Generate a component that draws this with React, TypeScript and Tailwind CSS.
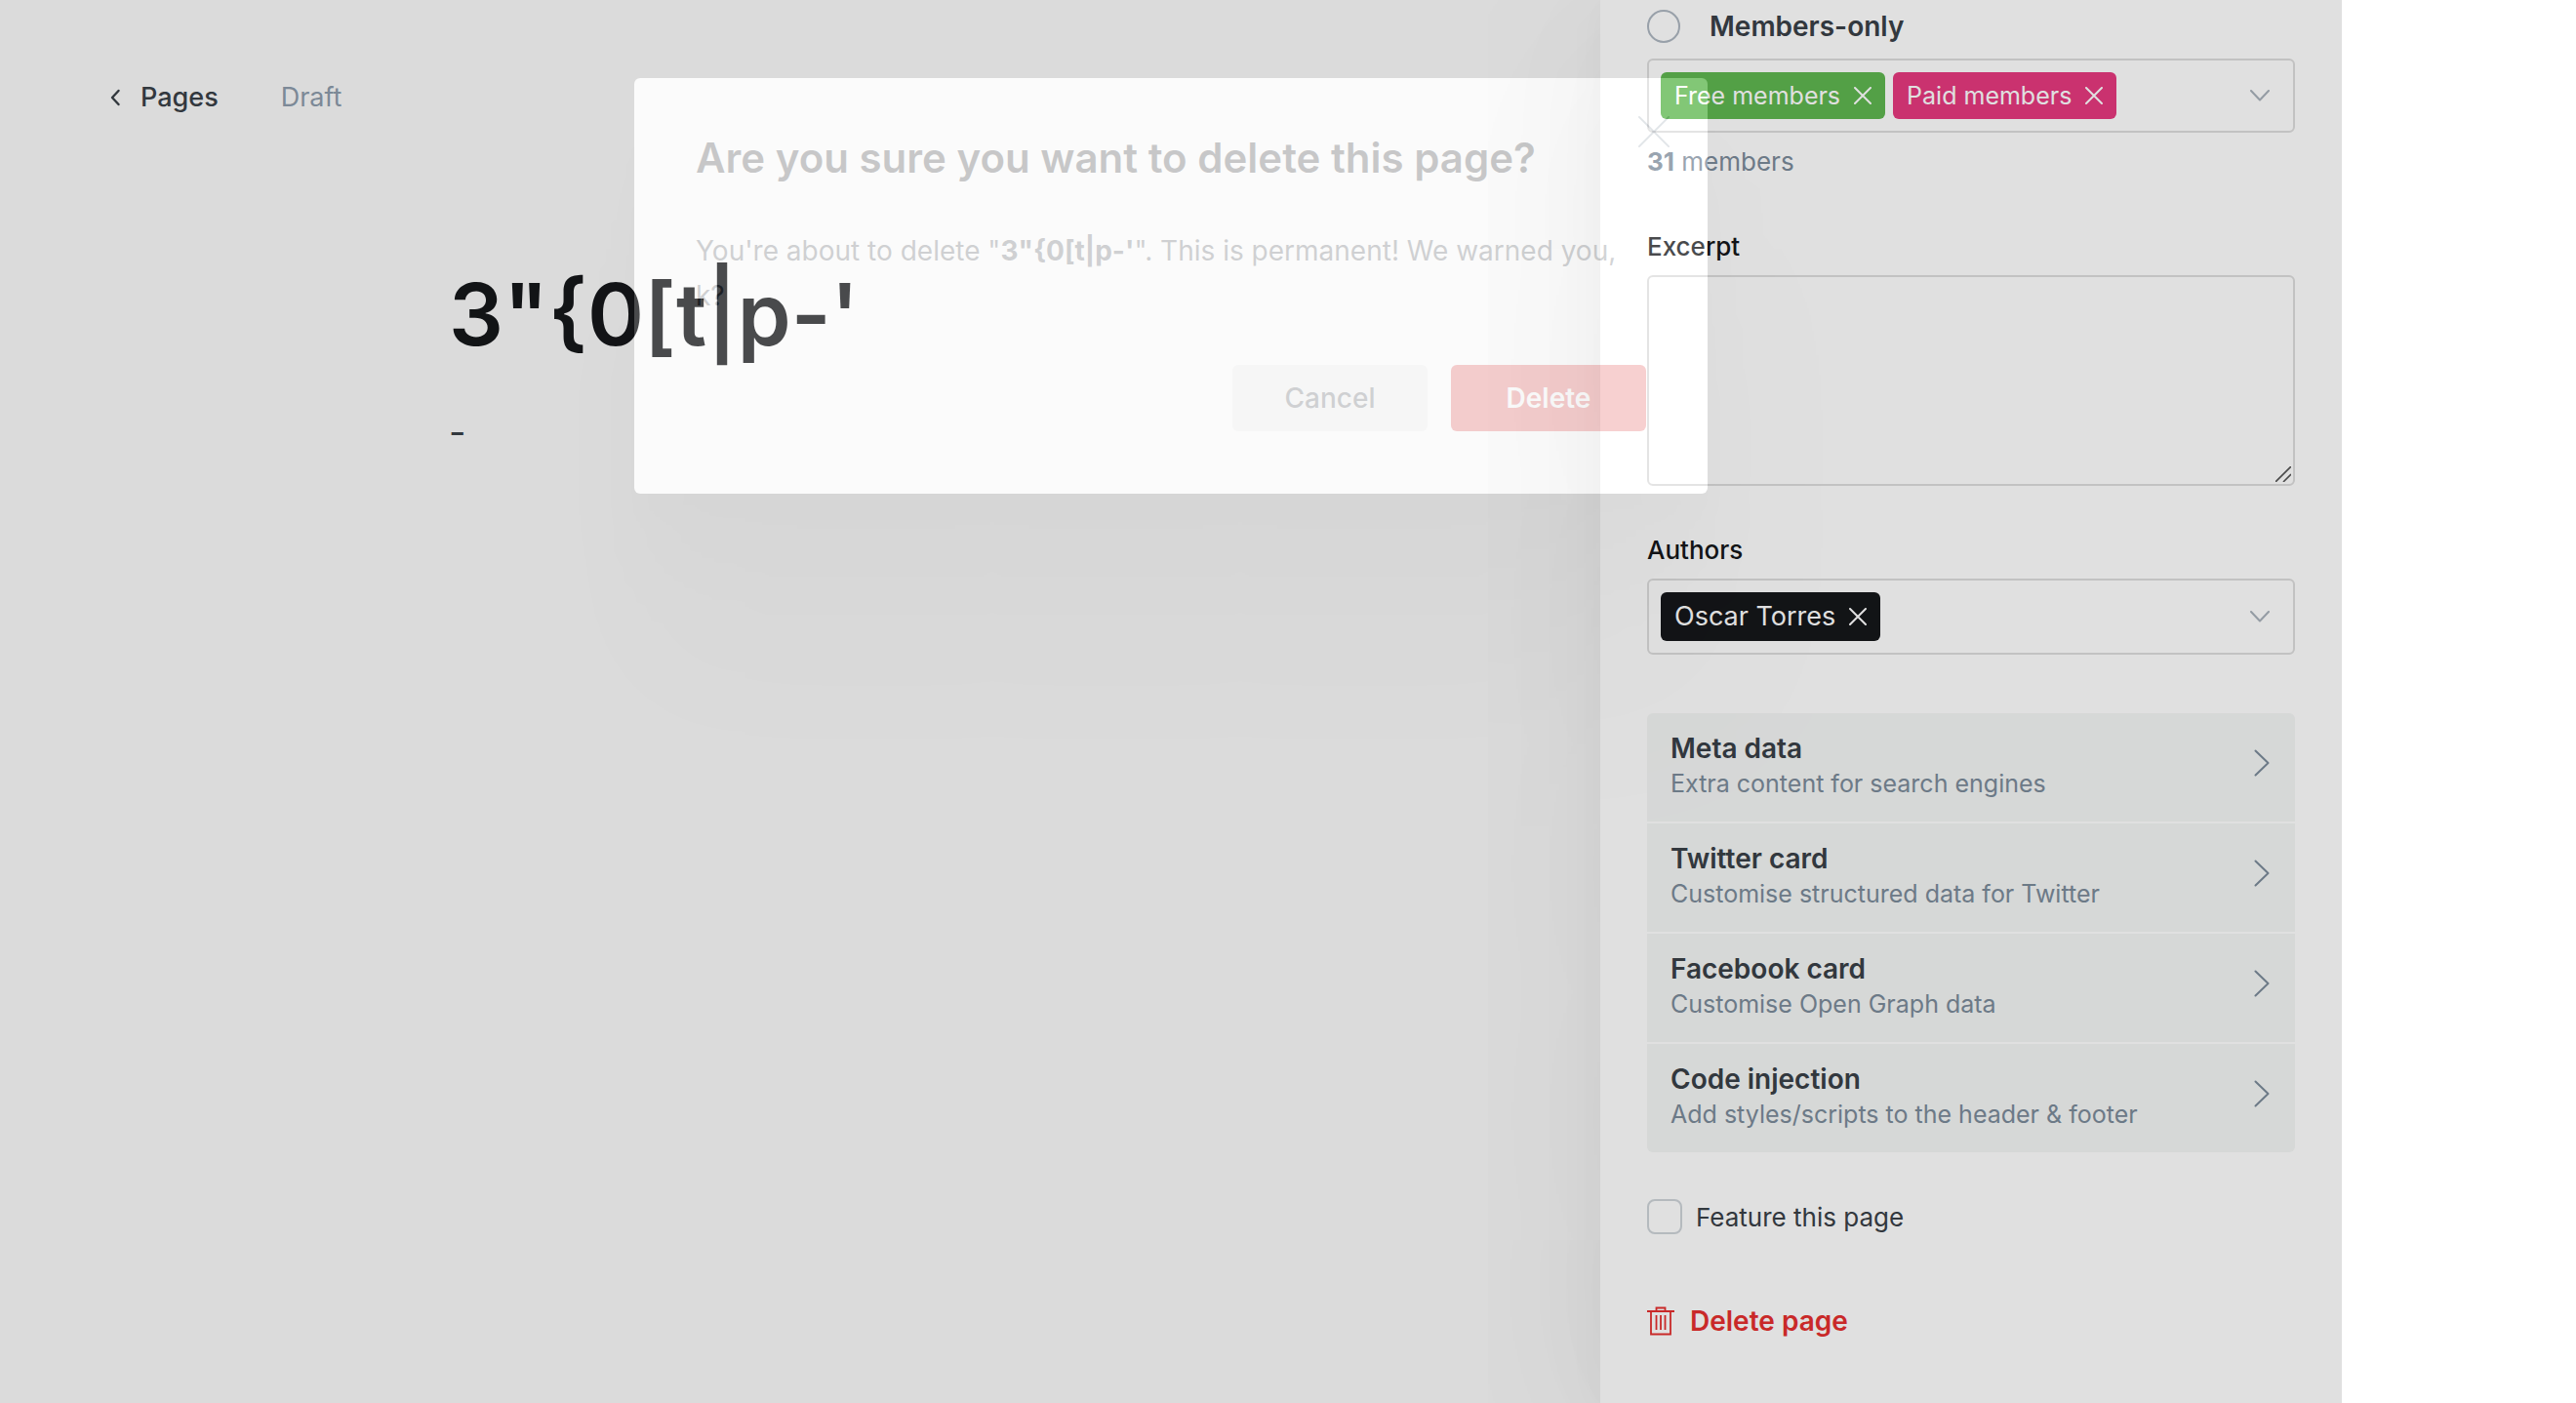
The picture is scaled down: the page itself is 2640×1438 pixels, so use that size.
import type { ReactNode } from "react";

const PAGE_TITLE = "3\"{0[t|p-'";

const SETTINGS_LINKS = [
  { title: "Meta data", hint: "Extra content for search engines" },
  { title: "Twitter card", hint: "Customise structured data for Twitter" },
  { title: "Facebook card", hint: "Customise Open Graph data" },
  { title: "Code injection", hint: "Add styles/scripts to the header & footer" },
];

function Cross({ className }: { className: string }) {
  return (
    <svg viewBox="0 0 18 18" fill="none" stroke="currentColor" strokeLinecap="round" className={className} aria-hidden="true">
      <path d="M1 1l16 16M17 1L1 17" />
    </svg>
  );
}

function Token({ label, className }: { label: string; className: string }) {
  return (
    <span className={`flex items-center gap-3.5 rounded-md px-3.5 leading-8 text-white ${className}`}>
      {label}
      <button type="button" aria-label={`Remove ${label}`}>
        <Cross className="size-[18px] stroke-2" />
      </button>
    </span>
  );
}

function TokenField({ label, className, children }: { label: string; className: string; children: ReactNode }) {
  return (
    <div role="group" aria-label={label} className={`flex items-center gap-2 rounded-md border-2 border-[#dddddd] pl-3 pr-6 ${className}`}>
      {children}
      <button type="button" aria-label={`Open ${label}`} className="ml-auto text-[#a9b2bb]">
        <svg viewBox="0 0 20 12" fill="none" stroke="currentColor" strokeWidth="2" strokeLinecap="round" strokeLinejoin="round" className="h-3 w-5" aria-hidden="true">
          <path d="M1 1l9 9.5L19 1" />
        </svg>
      </button>
    </div>
  );
}

function Editor() {
  return (
    <main className="min-w-0 flex-1 bg-[#fafafa]">
      <header className="flex items-center pl-28 pt-20">
        <a href="#pages" className="flex items-center gap-5 text-[27px] leading-10 font-medium text-[#394047]">
          <svg viewBox="0 0 12 18" fill="none" stroke="currentColor" strokeWidth="2.4" strokeLinecap="round" strokeLinejoin="round" className="h-[18px] w-3" aria-hidden="true">
            <path d="M9.500 2L3 9l6.500 7" />
          </svg>
          Pages
        </a>
        <span className="ml-16 text-[27px] leading-10 text-[#8e9cac]">Draft</span>
      </header>
      <section className="mt-[142px] pl-[460px]">
        <input aria-label="Page title" defaultValue={PAGE_TITLE} className="block h-[120px] w-full bg-transparent text-[88px] font-semibold text-[#15171a] outline-none" />
        <p className="mt-[30px] text-[38px] leading-[60px] text-[#394047]">-</p>
      </section>
    </main>
  );
}

function SettingsPanel() {
  return (
    <aside className="relative w-[760px] shrink-0 bg-white px-12 pt-2 text-[#15171a] shadow-[0_0_40px_rgba(0,0,0,0.03),0_20px_120px_rgba(0,0,0,0.04),0_60px_320px_rgba(0,0,0,0.06)]">
      <label className="flex h-[38px] items-center gap-[30px] text-[28px] font-semibold text-[#394047]">
        <input type="radio" name="visibility" className="size-[34px] appearance-none rounded-full border-2 border-[#aeb7c1]" />
        Members-only
      </label>
      <TokenField label="Member tiers" className="mt-3.5 h-[76px]">
        <Token label="Free members" className="h-12 bg-[#5fb750] text-[25px]" />
        <Token label="Paid members" className="h-12 bg-[#e63a7f] text-[25px]" />
      </TokenField>
      <p className="mt-3 text-[26px] leading-9 text-[#7c8b9a]">
        <strong className="font-bold">31</strong> members
      </p>

      <label htmlFor="excerpt" className="mt-[51px] block text-[26px] leading-9 font-medium">Excerpt</label>
      <div className="relative mt-[11px]">
        <textarea id="excerpt" className="block h-[216px] w-full resize-none rounded-md border-2 border-[#dddddd] bg-transparent p-3 text-[26px] outline-none" />
        <svg viewBox="0 0 16 16" stroke="#555" strokeWidth="1.6" className="absolute right-1 bottom-1 size-4" aria-hidden="true">
          <path d="M0 16L16 0M8 16l8-8" />
        </svg>
      </div>

      <h3 className="mt-12 text-[26px] leading-9 font-medium">Authors</h3>
      <TokenField label="Authors" className="mt-[11px] h-[78px]">
        <Token label="Oscar Torres" className="h-[50px] bg-[#15171a] text-[27px]" />
      </TokenField>

      <nav className="mt-15 flex flex-col gap-0.5 overflow-hidden rounded-md">
        {SETTINGS_LINKS.map((link) => (
          <button key={link.title} type="button" className="flex h-[111px] items-center justify-between bg-[#f4f6f5] pr-[26px] pl-6 text-left">
            <span className="pb-1">
              <span className="block text-[28px] leading-9 font-semibold text-[#394047]">{link.title}</span>
              <span className="block text-[25px] leading-9 text-[#7c8b9a]">{link.hint}</span>
            </span>
            <svg viewBox="0 0 16 28" fill="none" stroke="#7c8b9a" strokeWidth="2" strokeLinecap="round" strokeLinejoin="round" className="mb-2.5 h-7 w-4" aria-hidden="true">
              <path d="M1.500 1.500L14.500 14l-13 12.500" />
            </svg>
          </button>
        ))}
      </nav>

      <label className="mt-[47px] flex h-[38px] items-center gap-3.5 text-[26px] text-[#394047]">
        <input type="checkbox" className="size-9 appearance-none rounded-lg border-2 border-[#ced4d9]" />
        Feature this page
      </label>

      <button type="button" className="mt-[68px] flex h-10 items-center gap-4 text-[28px] font-semibold text-[#e5302f]">
        <svg viewBox="0 0 28 30" fill="none" stroke="currentColor" strokeWidth="1.8" className="h-[30px] w-7" aria-hidden="true">
          <path d="M0 5h28M9.500 5V1.500h9V5M4 5v23.500h20V5M9.500 9v15M14 9v15M18.500 9v15" />
        </svg>
        Delete page
      </button>
    </aside>
  );
}

function DeleteDialog() {
  return (
    <div className="absolute inset-0 flex items-start justify-center pt-20">
      <div
        role="dialog"
        aria-labelledby="dialog-title"
        className="relative w-[1100px] rounded-md bg-white px-[63px] pt-[56px] pb-16 opacity-[0.22] shadow-[0_0_0_4000px_rgba(0,0,0,0.545),0_24px_20px_rgba(0,0,0,0.04),0_80px_70px_rgba(0,0,0,0.08),0_200px_160px_rgba(0,0,0,0.12)]"
      >
        <button type="button" aria-label="Close" className="absolute top-[38px] right-[38px] text-[#7c8b9a]">
          <Cross className="size-[34px] stroke-1" />
        </button>
        <h2 id="dialog-title" className="text-[42px] leading-[52px] font-semibold text-[#15171a]">Are you sure you want to delete this page?</h2>
        <p className="mt-[46px] text-[28px] leading-[46px] text-[#394047]">
          You're about to delete "<strong className="font-bold">{PAGE_TITLE}</strong>". This is permanent! We warned you, k?
        </p>
        <div className="mt-12 flex justify-end gap-6">
          <button type="button" className="h-[68px] w-[200px] rounded-md bg-[#e9ebec] text-[28px] font-medium text-[#394047]">Cancel</button>
          <button type="button" className="h-[68px] w-[200px] rounded-md bg-[#df2e2e] text-[28px] font-semibold text-white">Delete</button>
        </div>
      </div>
    </div>
  );
}

export default function App() {
  return (
    <div className="bg-white pr-60 font-['Inter',sans-serif]">
      <div className="relative flex min-h-screen overflow-hidden">
        <Editor />
        <SettingsPanel />
        <DeleteDialog />
      </div>
    </div>
  );
}
